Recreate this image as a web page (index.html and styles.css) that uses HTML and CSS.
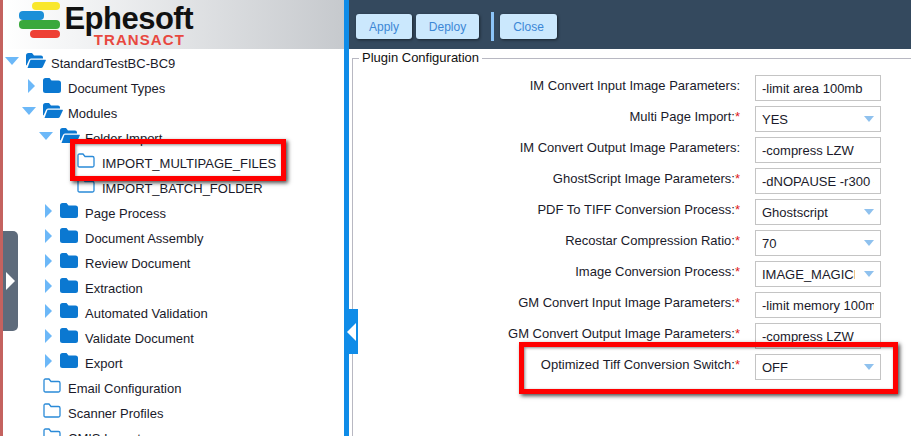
FILE: index.html
```html
<!DOCTYPE html>
<html lang="en">
<head>
<meta charset="utf-8">
<title>Ephesoft Transact</title>
<link rel="stylesheet" href="styles.css">
</head>
<body>
<svg class="defs" width="0" height="0">
  <symbol id="down" viewBox="0 0 14 8"><polygon points="0,0 14,0 7,8"/></symbol>
  <symbol id="right" viewBox="0 0 14 14"><polygon points="6,0 13,7 6,14"/></symbol>
  <symbol id="closed" viewBox="0 0 18 15"><path d="M0 2.5Q0 0 2.5 0H6.5L8.5 2.500H15.500Q18 2.500 18 5V12.500Q18 15 15.500 15H2.500Q0 15 0 12.500Z"/></symbol>
  <symbol id="open" viewBox="0 0 20 15"><path d="M0 2.500Q0 0 2.500 0H6L8 2.500H15Q17 2.500 17 4.500V5.500H5Q3.500 5.500 3 7L0.500 12.500L0 12Z"/><path d="M4.500 6.800H19.500Q20 6.800 19.800 7.500L17 13.500Q16.300 15 15 15H1.500Z"/></symbol>
  <symbol id="outline" viewBox="0 0 18 15"><path d="M1 2.500Q1 1 2.500 1H6L8 3.500H15.500Q17 3.500 17 5V12.500Q17 14 15.500 14H2.500Q1 14 1 12.500Z" fill="none" stroke="currentColor" stroke-width="1.300"/></symbol>
</svg>
<div class="app">
  <div class="edge"></div>
  <section class="left">
    <header class="brand">
      <div class="logo">
        <div class="bars">
          <i class="bar b1"></i><i class="bar b2"></i><i class="bar b3"></i><i class="bar b4"></i>
        </div>
        <div class="wordmark">
          <span class="eph">Ephesoft</span>
          <span class="tra">TRANSACT</span>
        </div>
      </div>
    </header>
    <ul class="tree">
      <li class="node l0"><svg class="arrow ad"><use href="#down"/></svg><svg class="folder fo"><use href="#open"/></svg><span>StandardTestBC-BC9</span></li>
      <li class="node l1"><svg class="arrow ar"><use href="#right"/></svg><svg class="folder fc"><use href="#closed"/></svg><span>Document Types</span></li>
      <li class="node l1"><svg class="arrow ad"><use href="#down"/></svg><svg class="folder fo"><use href="#open"/></svg><span>Modules</span></li>
      <li class="node l2"><svg class="arrow ad"><use href="#down"/></svg><svg class="folder fo"><use href="#open"/></svg><span>Folder Import</span></li>
      <li class="node l3"><span class="noarrow"></span><svg class="folder fl"><use href="#outline"/></svg><span>IMPORT_MULTIPAGE_FILES</span></li>
      <li class="node l3"><span class="noarrow"></span><svg class="folder fl"><use href="#outline"/></svg><span>IMPORT_BATCH_FOLDER</span></li>
      <li class="node l2"><svg class="arrow ar"><use href="#right"/></svg><svg class="folder fc"><use href="#closed"/></svg><span>Page Process</span></li>
      <li class="node l2"><svg class="arrow ar"><use href="#right"/></svg><svg class="folder fc"><use href="#closed"/></svg><span>Document Assembly</span></li>
      <li class="node l2"><svg class="arrow ar"><use href="#right"/></svg><svg class="folder fc"><use href="#closed"/></svg><span>Review Document</span></li>
      <li class="node l2"><svg class="arrow ar"><use href="#right"/></svg><svg class="folder fc"><use href="#closed"/></svg><span>Extraction</span></li>
      <li class="node l2"><svg class="arrow ar"><use href="#right"/></svg><svg class="folder fc"><use href="#closed"/></svg><span>Automated Validation</span></li>
      <li class="node l2"><svg class="arrow ar"><use href="#right"/></svg><svg class="folder fc"><use href="#closed"/></svg><span>Validate Document</span></li>
      <li class="node l2"><svg class="arrow ar"><use href="#right"/></svg><svg class="folder fc"><use href="#closed"/></svg><span>Export</span></li>
      <li class="node l1"><span class="noarrow"></span><svg class="folder fl"><use href="#outline"/></svg><span>Email Configuration</span></li>
      <li class="node l1"><span class="noarrow"></span><svg class="folder fl"><use href="#outline"/></svg><span>Scanner Profiles</span></li>
      <li class="node l1"><span class="noarrow"></span><svg class="folder fl"><use href="#outline"/></svg><span>CMIS Import</span></li>
    </ul>
  </section>
  <div class="splitter"></div>
  <section class="right">
    <div class="toolbar">
      <button class="btn">Apply</button>
      <button class="btn">Deploy</button>
      <span class="sep"></span>
      <button class="btn">Close</button>
    </div>
    <div class="content">
      <fieldset class="config">
        <legend>Plugin Configuration</legend>
        <div class="form">
          <label>IM Convert Input Image Parameters:</label>
          <div class="field"><span>-limit area 100mb</span></div>
          <label>Multi Page Import:<em>*</em></label>
          <div class="field sel"><span>YES</span></div>
          <label>IM Convert Output Image Parameters:</label>
          <div class="field"><span>-compress LZW</span></div>
          <label>GhostScript Image Parameters:<em>*</em></label>
          <div class="field"><span>-dNOPAUSE -r300 -sDEVICE</span></div>
          <label>PDF To TIFF Conversion Process:<em>*</em></label>
          <div class="field sel"><span>Ghostscript</span></div>
          <label>Recostar Compression Ratio:<em>*</em></label>
          <div class="field sel"><span>70</span></div>
          <label>Image Conversion Process:<em>*</em></label>
          <div class="field sel"><span class="clip">IMAGE_MAGICK</span></div>
          <label>GM Convert Input Image Parameters:<em>*</em></label>
          <div class="field"><span>-limit memory 100mb</span></div>
          <label>GM Convert Output Image Parameters:<em>*</em></label>
          <div class="field"><span>-compress LZW</span></div>
          <label>Optimized Tiff Conversion Switch:<em>*</em></label>
          <div class="field sel"><span>OFF</span></div>
        </div>
      </fieldset>
    </div>
  </section>
</div>
<div class="side-handle"><span class="tri-r"></span></div>
<div class="split-handle"><span class="tri-l"></span></div>
<div class="mark mark-tree"></div>
<div class="mark mark-form"></div>
</body>
</html>
```
FILE: styles.css
```css
* { box-sizing: border-box; }
html, body { margin: 0; height: 100%; overflow: hidden; background: #fff; }
body { font-family: "Liberation Sans", Arial, sans-serif; color: #1a1a2a; font-size: 13px; }
.defs { position: absolute; }
.app { display: flex; height: 436px; overflow: hidden; }
.edge { width: 3px; flex: none; background: #c4625f; }
.left { width: 341px; flex: none; display: flex; flex-direction: column; overflow: hidden; }
.brand { height: 49px; flex: none; background: linear-gradient(90deg, #fff 0%, #f4f5f6 20%, #c6c9cd 100%); padding: 2px 0 0 16px; overflow: hidden; }
.logo { display: flex; gap: 4px; }
.bars { width: 42px; display: flex; flex-direction: column; }
.bar { display: block; height: 8px; border-radius: 4px; }
.b1 { width: 28px; margin-left: 13px; margin-bottom: 1px; background: #f9e72c; }
.b2 { width: 25px; height: 9px; background: #1b8fd8; }
.b3 { width: 41px; background: #3aa83c; height: 9px; margin-bottom: 1px; }
.b4 { width: 30px; margin-left: 11px; background: #ee4035; }
.wordmark { display: flex; flex-direction: column; align-items: flex-end; line-height: 1; width: 128px; }
.eph { font-size: 31px; font-weight: 700; color: #111; letter-spacing: -0.5px; height: 30px; margin-top: 1px; }
.tra { font-size: 15px; font-weight: 700; color: #e8483f; letter-spacing: 1.1px; margin-right: 8px; margin-top: -1px; }
.tree { list-style: none; margin: 2px 0 0; padding: 0; }
.node { height: 25px; display: flex; align-items: center; white-space: nowrap; font-size: 13px; }
.l0 { padding-left: 2px; }
.l1 { padding-left: 19px; }
.l2 { padding-left: 36px; }
.l3 { padding-left: 53px; }
.arrow { width: 14px; flex: none; margin-right: 7px; fill: #6cb8f8; margin-bottom: 6px; }
.ad { height: 8px; }
.ar { height: 14px; }
.noarrow { width: 21px; flex: none; }
.folder { flex: none; height: 15px; margin-bottom: 6px; fill: #0b78d1; color: #2a8ad8; }
.fo { width: 20px; margin-right: 5px; }
.fc { width: 18px; margin-right: 7px; }
.fl { width: 18px; margin-right: 7px; }
.splitter { width: 5px; flex: none; background: #0f8ce8; }
.right { flex: 1; min-width: 0; display: flex; flex-direction: column; }
.toolbar { height: 49px; flex: none; background: #34495e; display: flex; align-items: center; padding-left: 7px; padding-top: 4px; }
.btn { width: 56px; height: 25px; border: 0; border-radius: 3px; background: #cbe8fd; color: #3c87d6; font: 12px "Liberation Sans", Arial, sans-serif; padding: 0; box-shadow: 1px 1px 3px rgba(0,0,0,.5); margin-right: 4px; }
.btn:nth-child(2) { width: 63px; margin-right: 12px; }
.btn:nth-child(4) { width: 57px; }
.sep { width: 3px; height: 29px; background: #8cc4f8; margin-right: 6px; }
.content { flex: 1; min-height: 0; display: flex; flex-direction: column; padding: 2px 0 0 3px; }
.config { margin: 0; flex: 1; min-height: 0; min-width: 0; padding: 0; border: 1px solid #b8b8c2; border-width: 1px 0 0 1px; }
.config legend { padding: 0 3px; margin-left: 6px; font-size: 13px; color: #111; line-height: 14px; }
.form { display: grid; grid-template-columns: 387px 126px; column-gap: 15px; row-gap: 5px; margin-top: 10px; }
.form label { text-align: right; font-size: 13px; padding-top: 3px; line-height: 15px; color: #1a1a2a; }
.form em { color: #e02020; font-style: normal; }
.field { height: 26px; border: 1px solid #c4c4c4; padding: 0 6px; font-size: 13px; line-height: 25px; position: relative; background: #fff; color: #1a1a2a; }
.field span { display: block; white-space: nowrap; overflow: hidden; }
.field .clip { width: 93px; }
.sel::after { content: ""; position: absolute; right: 6px; top: 9px; border: 5px solid transparent; border-top: 6px solid #8fc1ee; border-bottom: 0; }
.side-handle { position: absolute; left: 3px; top: 231px; width: 15px; height: 100px; background: #5e6b7b; border-radius: 0 5px 5px 0; display: flex; align-items: center; justify-content: center; }
.tri-r { width: 0; height: 0; border-left: 9px solid #fff; border-top: 9px solid transparent; border-bottom: 9px solid transparent; }
.split-handle { position: absolute; left: 344px; top: 309px; width: 14px; height: 45px; background: #0f8ce8; display: flex; align-items: center; justify-content: center; }
.tri-l { width: 0; height: 0; border-right: 9px solid #fff; border-top: 9px solid transparent; border-bottom: 9px solid transparent; }
.mark { position: absolute; border: 5px solid #f00; box-shadow: 2px 2px 4px rgba(0,0,0,.7), inset 1px 1px 3px rgba(0,0,0,.45); }
.mark-tree { left: 70px; top: 139px; width: 216px; height: 42px; }
.mark-form { left: 519px; top: 342px; width: 379px; height: 52px; }
```
